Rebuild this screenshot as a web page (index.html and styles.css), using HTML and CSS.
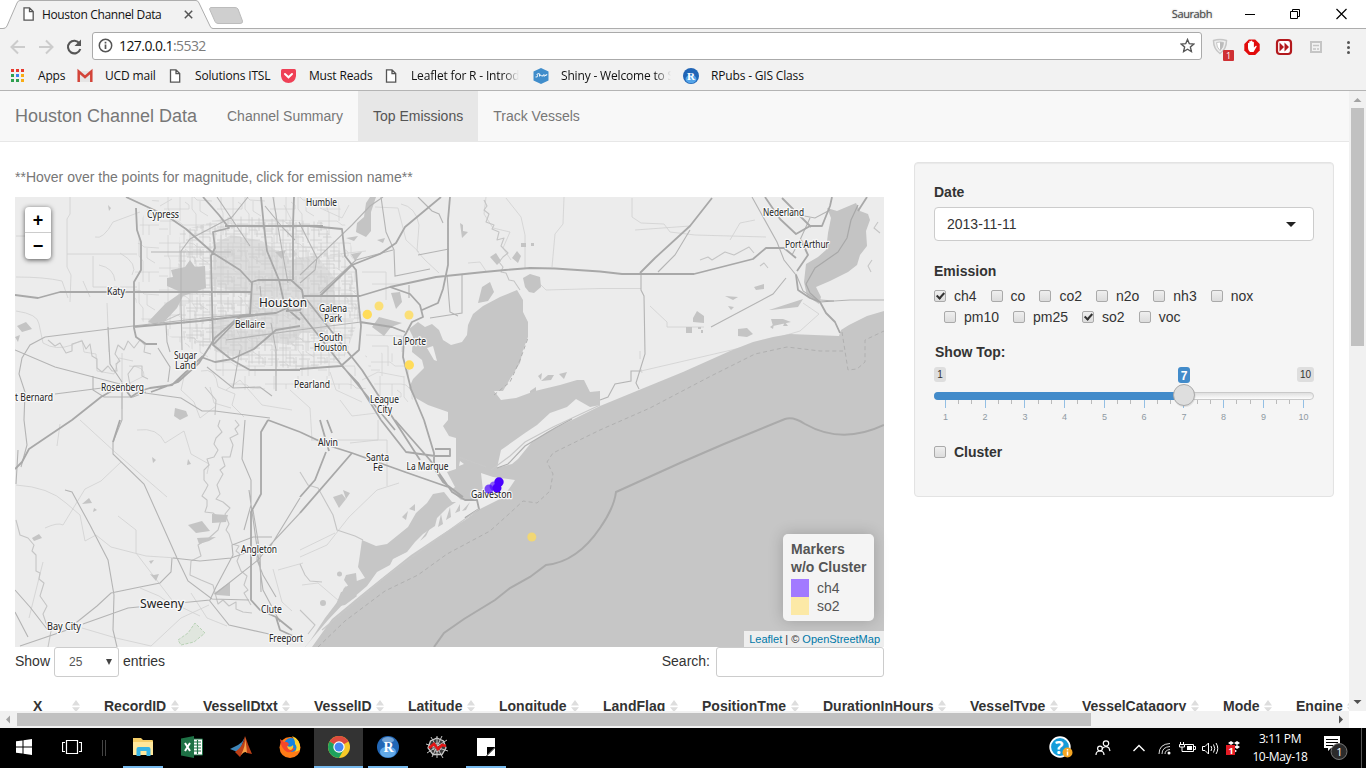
FILE: index.html
```html
<!DOCTYPE html>
<html lang="en">
<head>
<meta charset="utf-8">
<title>Houston Channel Data</title>
<link rel="stylesheet" href="styles.css">
</head>
<body>
<div class="browser">
  <div class="tabstrip">
    <svg class="tab-shape" width="260" height="29" viewBox="0 0 260 29"><path d="M0 28.5H3Q6 28.5 7 26L17 3Q18 .5 20 .5H196Q198 .5 199 3L210 26Q211 28.5 213 28.5V30H0Z" fill="#f2f2f2"/><path d="M0 28.5H3Q6 28.5 7 26L17 3Q18 .5 20 .5H196Q198 .5 199 3L210 26Q211 28.5 213 28.5H260" fill="none" stroke="#adadad"/><path d="M210.500 7.500H235Q237 7.500 238 9L242.500 21Q243 23.500 240 23.500H218Q216 23.500 215 21.500L209.500 9Z" fill="#cfcfcf" stroke="#bcbcbc"/></svg>
    <svg class="tab-icon" width="11" height="14" viewBox="0 0 11 14"><path d="M1 .8H6.500L10.200 4.500V13.200H1ZM6.500 1V4.700H10" fill="#fff" stroke="#555" stroke-width="1.300"/></svg>
    <span class="tab-title">Houston Channel Data</span>
    <svg class="tab-close" width="9" height="9" viewBox="0 0 9 9"><path d="M.8.8L8.200 8.200M8.200.8L.8 8.200" stroke="#555" stroke-width="1.500"/></svg>
    <span class="user">Saurabh</span>
    <svg class="win" width="104" height="12" viewBox="0 0 104 12"><g fill="none" stroke="#000"><path d="M0 6.500H10M45.500 3.500H52.500V10.500H45.500ZM47.500 3V1.500H54.500V8.500H53"/><path d="M91.500 1L101.500 11M101.500 1L91.500 11" stroke-width="1.200"/></g></svg>
  </div>
  <div class="toolbar">
    <svg class="navs" width="92" height="33" viewBox="0 29 92 33"><g fill="none" stroke="#ccc" stroke-width="2"><path d="M25 47H12M18 40.500L11.500 47L18 53.500M39 47H52M46 40.500L52.500 47L46 53.500"/><path d="M79.500 43.500A6.300 6.300 0 1 0 80.300 49" stroke="#555" stroke-width="2.100"/></g><path d="M81 39.500V46H74.500Z" fill="#555"/></svg>
    <div class="address">
      <svg width="15" height="15" viewBox="0 0 15 15"><circle cx="7.500" cy="7.500" r="6.200" fill="none" stroke="#555" stroke-width="1.500"/><path d="M7.500 6.500V11M7.500 3.800V5.400" stroke="#555" stroke-width="1.700"/></svg>
      <span class="url">127.0.0.1<i>:5532</i></span>
      <svg class="star" width="15" height="15" viewBox="0 0 15 15"><path d="M7.500 1.500L9.300 5.700L13.800 6.100L10.400 9.100L11.400 13.500L7.500 11.200L3.600 13.500L4.600 9.100L1.200 6.100L5.700 5.700Z" fill="none" stroke="#555" stroke-width="1.400"/></svg>
    </div>
    <svg class="exts" width="164" height="33" viewBox="1202 29 164 33">
      <path d="M1213.500 40.500Q1220 38.500 1226.500 40.500Q1226.500 49 1220 53.500Q1213.500 49 1213.500 40.500Z" fill="#eee" stroke="#c6c6c6" stroke-width="1.500"/><path d="M1216.500 42.500Q1220 41.500 1223.500 42.500Q1223.500 47.500 1220 50.500Q1216.500 47.500 1216.500 42.500Z" fill="#fff" stroke="#c6c6c6"/><path d="M1220 42V50.500Q1223.500 47.500 1223.500 42.500Z" fill="#bbb"/>
      <rect x="1223" y="50" width="11" height="11" rx="1" fill="#cf3034"/><text x="1226" y="59" font-size="9" fill="#fff" class="ui">1</text>
      <path d="M1248.800 39.500H1255.200L1259.700 44V50.400L1255.200 55H1248.800L1244.300 50.400V44Z" fill="#e20c0c"/><path d="M1248 48V43.200Q1248.700 42.400 1249.300 43.200V41.500Q1250 40.700 1250.800 41.500V41Q1251.600 40 1252.400 41V42Q1253.200 41.200 1253.900 42.200V47.500L1255.800 45.800Q1257 45.600 1256.600 46.700L1253.500 52H1250Q1248 50.500 1248 48Z" fill="#fff"/>
      <rect x="1277" y="40" width="14" height="14" rx="3" fill="#fff" stroke="#b3191d" stroke-width="2.200"/><path d="M1279.500 42.500L1284 47L1279.500 51.500ZM1284.500 42.500L1289 47L1284.500 51.500Z" fill="#b3191d"/>
      <rect x="1311" y="42" width="10" height="10" fill="none" stroke="#c5c5c5" stroke-width="2"/><path d="M1313 45.500H1319M1313 49H1316M1317 49H1319" stroke="#c5c5c5" stroke-width="1.600"/>
      <g fill="#555"><circle cx="1348.500" cy="42.500" r="1.500"/><circle cx="1348.500" cy="47.500" r="1.500"/><circle cx="1348.500" cy="52.500" r="1.500"/></g>
    </svg>
  </div>
  <div class="bookmarks">
    <div class="bm" style="width:67px"><svg width="16" height="16" viewBox="0 0 16 16"><path d="M1 1h3v3H1zM6 1h3v3H6zM11 1h3v3h-3z" fill="#e8392f"/><path d="M1 6h3v3H1zM1 11h3v3H1zM6 11h3v3H6z" fill="#2fa04f"/><path d="M6 6h3v3H6z" fill="#3b82f0"/><path d="M11 6h3v3h-3zM11 11h3v3h-3z" fill="#f9ac13"/></svg><span style="margin-left:12px">Apps</span></div>
    <div class="bm" style="width:91px"><svg width="16" height="16" viewBox="0 0 16 16"><path d="M1 3H15V14H1Z" fill="#e5e5e5"/><path d="M1.700 14V3.500L8 9L14.300 3.500V14" fill="none" stroke="#d34439" stroke-width="2.500"/></svg><span style="margin-left:12px">UCD mail</span></div>
    <div class="bm" style="width:112px"><svg width="16" height="16" viewBox="0 0 16 16"><path d="M2.500 1.800H8L11.700 5.500V14.200H2.500ZM8 2V5.700H11.500" fill="#fff" stroke="#555" stroke-width="1.300"/></svg><span style="margin-left:11px">Solutions ITSL</span></div>
    <div class="bm" style="width:104px"><svg width="17" height="16" viewBox="0 0 17 16"><path d="M2.500 1H14.500Q16 1 16 2.500V8Q15 15 8.500 15Q2 15 1 8V2.500Q1 1 2.500 1Z" fill="#ef4056"/><path d="M5 6L8.500 9.300L12 6" fill="none" stroke="#fff" stroke-width="2" stroke-linecap="round"/></svg><span style="margin-left:12px">Must Reads</span></div>
    <div class="bm" style="width:149px"><svg width="16" height="16" viewBox="0 0 16 16"><path d="M2.500 1.800H8L11.700 5.500V14.200H2.500ZM8 2V5.700H11.500" fill="#fff" stroke="#555" stroke-width="1.300"/></svg><span class="fade" style="margin-left:11px;width:108px">Leaflet for R - Introdu</span></div>
    <div class="bm" style="width:150px"><svg width="16" height="16" viewBox="0 0 16 16"><path d="M8 0L15.500 3.500V12.500L8 16L.5 12.500V3.500Z" fill="#408dcb"/><path d="M6 5.500Q2.500 6 4.500 7.500Q5 9.500 2.500 9M6.500 5.500V8.500M6.500 7.500Q8 6 8 8M9 7V8.500M10 8.500V7Q11.500 6 11.500 8.500M12 6.500L12.700 8L14 6" fill="none" stroke="#fff" stroke-width=".9"/></svg><span class="fade" style="margin-left:12px;width:110px">Shiny - Welcome to S</span></div>
    <div class="bm"><svg width="16" height="16" viewBox="0 0 16 16"><circle cx="8" cy="8" r="8" fill="#2165b6"/><ellipse cx="8" cy="11" rx="5.500" ry="4.300" fill="#54a4e8"/><text x="4" y="12" font-size="11" font-weight="bold" fill="#fff" class="serif">R</text></svg><span style="margin-left:12px">RPubs - GIS Class</span></div>
  </div>

  <div class="viewport">
    <div class="page">
      <nav class="navbar"><span class="brand">Houston Channel Data</span><span class="nav-item">Channel Summary</span><span class="nav-item active">Top Emissions</span><span class="nav-item">Track Vessels</span></nav>
      <div class="columns">
        <main class="content">
          <p class="hint">**Hover over the points for magnitude, click for emission name**</p>
          <div class="map">
            <svg width="869" height="450" viewBox="15 197 869 450">
              <defs>
                <pattern id="streets" width="31" height="27" patternUnits="userSpaceOnUse"><path d="M0 4H31M0 11H18M8 18H31M0 24H12M4 0V27M11 0V15M17 6V27M24 0V18M29 9V27M17 15H24M20 8H31M7 7H15V13M13 21H24V26M1 14H9V21" fill="none" stroke="#cbcbcb" stroke-width=".8"/></pattern>
                <pattern id="sparse" width="53" height="47" patternUnits="userSpaceOnUse"><path d="M0 8H30Q36 8 38 12L53 13M5 21H30M0 33H19L24 37H53M9 0V20L11 25V47M21 8V33M33 0V21L37 26V47M41 13V23L49 28M0 41H9M43 37V47M26 14L30 17V21" fill="none" stroke="#d3d3d3" stroke-width=".8"/></pattern>
              </defs>
              <rect x="15" y="197" width="869" height="450" fill="#ececec"/>
              <path d="M213 245L231 235L262 241L290 260L316 255L333 276L337 318L321 334L302 332L292 345L262 341L247 356L216 352L213 321L246 316L250 295L213 286Z" fill="#dddddd"/>
              <path d="M154 197H337L352 248L358 298L348 352L366 389H287L236 390L199 353L142 321L133 293L140 222Z" fill="url(#sparse)"/>
              <path d="M180 231L232 216L322 222L350 267L361 313L344 358L303 370L248 363L184 340L177 291Z" fill="url(#streets)"/>
              <path d="M364 352L405 354L418 397L394 408L378 396Z" fill="url(#sparse)"/>
              <g fill="none" stroke="#d0d0d0" stroke-width=".8">
                <path d="M70 197V214L67 219V267L71 275L70 302M67 254H137M93 256V287H137M16 236H44M16 277Q45 277 62 281L68 298M95 237Q103 240 113 222L140 212M99 265Q114 268 115 281M120 253Q139 264 132 275M83 281L90 297M107 303L109 352M122 353V409M16 311Q38 314 39 324L43 343Q56 351 72 345L82 340L84 352L96 354L97 371L114 374L119 358L133 361M129 366Q145 366 144 376L130 383L133 392M201 371Q216 367 218 387L235 394L232 405L244 417M205 329L234 324L241 339L260 334M216 338V370H258"/>
                <path d="M80 420L116 453L167 497M137 430Q158 427 165 443L184 431L191 454L209 464L207 474M45 528Q58 522 63 525L85 489L101 481L121 462M16 485Q49 487 66 503L80 515L85 541L96 535L111 547L146 556L177 558M118 516L136 530V553L175 604L200 616M82 628L116 638L151 646L181 618L209 605M140 588L159 596L172 605M191 593L207 618L227 626M273 569L282 602L292 611M278 570L303 563"/>
                <path d="M401 204Q416 207 419 225L417 251L425 260L439 273M506 198L521 217L525 235V268M564 197L563 224L555 234L552 267M540 284L546 290L600 288.500H641M486 197L484 214L493 228L510 232L503 248L511 260M468 263L480 262L486 271M632 198V217L641 223L664 224L670 232L695 235L766 237M641 371L753 345L800 331L819 314L803 303M641 369L642 373M650 306L667 322V327H704M640 359V351M635 230L690 226M730 240L740 223L755 220"/>
                <path d="M300 557L327 545L349 517L377 490L399 483M311 440H387V486M350 443L378 440V420M300 550L335 533M302 585L318 583L339 601L346 586"/>
                <path d="M185 372L181 390L194 402L200 418L216 406M210 387L214 403L231 408M60 424L57 446M43 562L29 618"/>
                <path d="M226 390L240 380L262 405L292 410M290 390L310 408L312 440M340 400L352 416L385 412M330 372L336 390L362 402M284 205L297 231M320 208L342 218L349 205M160 206L172 199M375 207L398 208L406 240L419 252M345 272V300M330 255L366 251M362 272H386V300M372 284H404M366 335L402 336V352M372 346H388V366M362 380L378 372L404 377M430 350L437 360" stroke="#d3d3d3"/>
              </g>
              <g fill="#c4c4c4">
                <path d="M148 322L165 304L182 292L176 290L167 286V278L173 277L171 270L185 267L190 260L195 267L205 266L206 288L183 296L177 308L165 321L154 324Z"/>
                <path d="M357 223L364 217L366 203L370 197H376L371 212V231L366 237L356 232Z"/>
                <path d="M460 223L463 225V231L468 232L462 238ZM523 278L530 274L540 277L541 287L534 293L529 292L525 287ZM490 257L496 253L501 261L497 265ZM512 258L517 251L521 256L518 263ZM521 243h5v4h-5ZM531 243h3v3h-3ZM478 303L482 287L490 282L494 292L488 301ZM391 293L400 292L402 302L396 309ZM402 323L391 327L384 336L372 327L379 317Z"/>
                <path d="M693 318L697 311L704 316V323L693 322ZM738 329L747 328L753 334L747 337L738 336ZM769 310L803 299L798 307L771 310ZM771 319L783 319L791 322L773 326ZM725 296L738 297L733 300ZM785 322L788 326L783 326ZM770 327L774 324L773 329ZM548 375L554 375L551 380L541 381ZM559 374L567 372L564 379ZM530 391L536 387V393L530 393ZM538 376L542 373L541 380ZM686 327h6v6h-6ZM698 327h3v2h-3ZM701 330h2v3h-2ZM754 287L764 284V289L756 290ZM728 306L734 307L731 310ZM175 408L186 411L188 416L180 420L174 416ZM188 525L202 521L210 531L196 533ZM212 514L228 515L226 522L212 523ZM197 538L216 537L209 541L199 544Z"/>
                <path d="M213 594L230 582V596L217 595ZM32 538L39 534L42 538L34 541ZM89 498L92 503L82 504ZM17 326L26 322L32 329L22 332ZM15 337L20 335L18 342ZM343 490L350 493L346 499ZM338 499L341 503L338 507ZM150 574L154 575L159 574L156 581ZM149 561L154 560L151 564ZM94 508L97 510L93 512ZM152 457L156 460L153 463ZM188 459L191 464L187 465ZM108 205L111 208L109 211ZM275 252L286 250L282 259ZM346 238L358 236L354 241ZM377 240L385 238L383 243ZM351 254L362 252L355 261Z"/>
              </g>
              <path d="M884 311L867 316L849 325L841 330L839 336L790 334L773 337L753 342L730 351L683 372L639 390L600 406L572 420L547 432L531 443L518 459L512 464L497 468L501 450L525 433L537 425L550 413L567 407L576 399L590 407L600 405L600 391L590 392L584 380L577 380L560 385L535 391L516 398L501 400L494 391L503 391L510 379L520 363L523 350L528 337L528 322L523 312V300L517 290L500 297L483 306L473 314L468 325L467 335L462 342L451 345L443 340L439 330L432 324L425 327L418 322L409 329L413 337L412 352L422 360L424 368L413 379L409 388L414 397L428 405L448 412V420L443 426L449 436L456 438V469L447 472L455 487L451 490L459 498L463 502L452 502L444 492L433 494L427 503L416 513L408 527L387 544L376 546L362 540L359 561L358 567L365 578L354 582L344 588L338 601L325 618L310 641L305 647H884Z" fill="#c6c6c6"/>
              <path d="M806 264L818 257L826 250L828 233L831 218L827 208L837 211L856 203L860 211L868 214L870 220L866 231L867 246L860 255L857 265L848 272L830 281L816 287L821 297L819 304L807 296L804 282Z" fill="#c4c4c4"/>
              <path d="M367 586L377 572L390 565L393 559L407 552L415 542L423 534L435 526L437 518L447 508L459 500L473 499L474 491L483 491L481 473L493 477L515 480L509 489L500 499L480 509L465 520L441 535L411 555L382 578L361 595L332 619L312 647H305L328 620L345 602L353 598Z" fill="#ececec"/>
              <path d="M433 346L437 361L434 360L427 348ZM460 461L464 464L459 466Z" fill="#eee"/>
              <g fill="#c6c6c6"><path d="M420 541L431 526L426 536ZM438 527L441 514L443 524ZM446 520L450 507L451 517ZM455 513L460 504V511ZM462 511L470 502L466 510Z"/><path d="M333 497L342 494L346 499L339 508ZM409 509L415 504V511ZM402 517L408 511L406 520ZM346 575L356 573L357 583L349 587L344 580ZM341 592L352 590L357 596L345 605L335 607ZM320 603a3 3 0 1 0 6 0a3 3 0 1 0-6 0ZM337 574a2.500 2.500 0 1 0 5 0a2.500 2.500 0 1 0-5 0Z"/></g>
              <!-- rivers -->
              <g fill="none" stroke="#c5c5c5" stroke-width="1.100" stroke-linejoin="round">
                <path d="M220 420L218 426L222 432L216 438L214 444L218 450L214 457L207 459L209 465L204 470V480L208 485L206 489L202 496L207 500V506L205 512L213 513L221 520L218 530L209 538L198 545L201 556L191 561L190 575L201 580L213 585L218 604L223 600L229 606L236 602V609L243 612L252 613"/>
                <path d="M235 420L239 425L235 429L238 434L230 438L233 445L230 457H222L225 466L220 470L223 474L217 485L220 494L216 499L223 502L230 508L225 514L229 524L226 530L229 534L232 544L239 546L236 551L240 554L237 561L241 571L247 576L244 585L248 590L244 593L251 605"/>
                <path d="M16 520L20 535L28 538L34 545L32 551L36 555V571L40 573L39 579L44 583L40 596L47 606L43 614L46 623L51 631L48 647"/>
                <path d="M484 200L487 206L484 210L489 214L486 222L494 225L492 229L499 232L497 240L504 238L501 246L508 253L503 257L499 262L503 267L501 272L506 273L509 280L514 281L520 290"/>
                <path d="M160 323L180 314M181 287V272M300 472L308 485L318 488L333 515L337 530L343 532L355 536L363 540M300 564L305 575L310 581L322 582M300 610L315 625L308 634"/>
                <path d="M48 340L55 346L60 343L66 353L72 351V344L82 341L86 349L90 344L92 356L97 359V368L102 372L108 366L112 371H117L116 364L120 361L115 354L118 345L124 350L128 341L134 348L140 340L145 345L144 352L151 354M130 385L128 374L134 366H142V376L148 379M205 387L216 400L215 415M700 260L708 257L712 260L725 252L734 255L749 247L754 253M760 266L764 263L768 268M872 260L868 266L871 272M878 222L874 228L880 233"/>
              </g>
              <!-- secondary roads -->
              <g fill="none" stroke="#b4b4b4" stroke-width="1.100">
                <path d="M45 337L30 345L22 358L19 374L25 392L24 420L27 445L21 467M108 327L110 364L122 382M45 337L133 326L213 317L250 314M158 348L170 367L168 382M122 383V420L113 442V454L144 484L177 558L188 581L212 599L249 600M15 350L55 367L120 384M55 394L102 388M93 376V390L104 397H133L146 392M145 393L181 398L202 411L215 411L270 418"/>
                <path d="M207 367L233 388L260 387L272 396M276 391V350L271 323M233 388L240 350M181 251V304L182 350M166 324L167 342L170 352M151 252H231M181 251L190 239L232 217L248 197M217 197L250 246M300 275L352 225L370 206L383 197M320 293L356 260L393 250M265 206L283 228L295 240M273 197L282 250L288 283M260 286L262 306M226 340L291 331L361 322M299 222L317 258L315 270L300 283"/>
                <path d="M381 197L386 232L394 250L395 276L430 269M409 285V298M447 275L450 312L458 316M462 274L462 313L430 318M418 255L449 249M418 197L426 205L432 211L439 214L443 223"/>
                <path d="M641 274V290L644 296L645 354L636 383L639 389M752 197L777 242L784 260L796 275M690 230L675 255L658 272M711 327L773 294L786 278M796 274L803 291L820 302M783 212L815 218L830 210M810 218L800 240L792 255M641 371H631V381L615 384L608 397L600 400M820 300L834 301L850 300H884"/>
                <path d="M65 490L72 492L90 525L108 560L114 595L113 630L117 647M172 558L171 572L160 583L140 587L111 593L97 606L67 630L20 646M83 624L128 608L210 600L216 587L233 555L232 545L253 537H272M173 558L200 561L231 558L248 552M215 594L258 560L270 545L300 513M270 547L300 498M245 420L242 459L251 480V505L244 530M249 490L263 590L280 622M253 510L260 553L261 592M258 540L257 560L263 575L276 597M209 600L229 625L269 634M15 590L30 607L47 629M15 612L28 637M16 484L18 450"/>
              </g>
              <!-- highways -->
              <g fill="none" stroke="#a8a8a8" stroke-width="1.800" stroke-linejoin="round">
                <path d="M136 208L137 230L141 242V270L134 282V328L136 337L146 344H157M15 295L38 298L60 292H135L252 292M126 197L167 216L186 229L213 253L240 270L252 283L250 315M133 327L200 321L250 315L276 313L287 308L300 302M203 197L219 215L229 228L213 232L215 248L211 256L213 345L232 360L250 370H300M201 357L215 362L232 359L254 349L276 330L300 326M213 345L240 317L276 313M261 197L264 227L267 251L279 280L285 307L300 320M252 282L258 280H291L302 290L304 302L300 310L286 311M294 197L293 225V280M225 226H323"/>
                <path d="M323 226H310L342 229L345 256L356 270L358 297L361 326L359 350L341 366L300 369M441 197L405 227L396 243L380 254L352 265L320 296M302 296H360L390 287L436 277L484 272L505 270L530 268L555 268.500L600 271.500L622 274H694L753 259L766 248H784L796 258M390 287L410 294L420 305L423 317L412 322L404 337L403 357L411 389L424 420M300 312L340 363L395 430M307 300L362 370L420 460M360 322L392 327L405 332M341 365L358 383L381 420M450 197L448 220V265L443 289L438 303L422 310"/>
                <path d="M640 273L655 258L690 226L712 198M765 197L780 219L796 234L810 226H822L830 206L832 197M796 275L798 290L810 298L820 302L826 313L835 322L840 333M867 197L858 211M782 198L811 227M801 240L808 255L797 271"/>
                <path d="M858 205L851 220L847 238L838 252L815 268L806 284L810 293L820 302L834 301" stroke-width="1.200"/>
                <path d="M15 469L22 462L29 449L72 420L101 397L122 385L131 397L140 391L150 388L172 385L203 356M120 420L113 442M268 420L261 432V494L251 512V600L260 610L276 617L292 630M268 420L300 432M276 617L280 630L295 637M151 392L178 382L199 363L215 338L240 316L252 315"/>
                <path d="M381 420L406 452L435 456L450 456V449H435M424 420L434 453V468L443 482L463 497M300 432L330 446L352 453L405 472L448 487M395 420L430 460L452 492L465 500H477L479 509L465 518M300 497L315 480L326 452M300 513L352 453M329 451L320 420M327 420L332 433"/>
              </g>
              <g fill="none" stroke="#c8c8c8" stroke-width="1.200"><path d="M479 509L430 544L385 577L322 630M491 470L510 456L525 442L553 427L600 405M459 457L486 467"/><path d="M497 468L508 464L525 446L555 428L572 419" stroke="#b0b0b0"/></g>
              <path d="M434 647L444 633L464 619L495 600L510 588L530 577L546 565Q577 562 600 528Q614 508 616 492L680 463L724 444L785 419Q793 416 805 424Q842 445 884 425" fill="none" stroke="#aaa" stroke-width="2"/>
              <path d="M318 647L345 621L385 591L418 575L447 554L490 531L510 513L523 501L537 503L550 491L553 474L547 462L553 453L600 430L650 408L711 376L755 354L787 347L820 351H843M842 332L848 370L857 369L865 362V340L884 331M494 395L510 382L520 360L528 338" fill="none" stroke="#b0b0b0" stroke-dasharray="4 3"/>
              <path d="M178 640L188 633L195 623L205 633L194 642L181 645Z" fill="#e0e6de" stroke="#b9d2b6" stroke-dasharray="3 1.500"/>
              <g fill="#ffdc5a"><circle cx="367.300" cy="314.500" r="4.700"/><circle cx="379" cy="306" r="4.500" opacity=".8"/><circle cx="409" cy="315" r="4.500" opacity=".8"/><circle cx="409.300" cy="365" r="4.700"/><circle cx="531.800" cy="537" r="4.500" opacity=".75"/></g>
              <g class="labels">
                <text x="147" y="218" textLength="32" lengthAdjust="spacingAndGlyphs">Cypress</text><text x="306" y="205.500" textLength="31" lengthAdjust="spacingAndGlyphs">Humble</text><text x="763" y="215.500" textLength="41" lengthAdjust="spacingAndGlyphs">Nederland</text><text x="785" y="247.500" textLength="44" lengthAdjust="spacingAndGlyphs">Port Arthur</text>
                <text x="107" y="295" textLength="18" lengthAdjust="spacingAndGlyphs">Katy</text><text x="259" y="307" textLength="48" lengthAdjust="spacingAndGlyphs" class="big">Houston</text><text x="235" y="328" textLength="30" lengthAdjust="spacingAndGlyphs">Bellaire</text><text x="319" y="312" textLength="28" lengthAdjust="spacingAndGlyphs">Galena</text><text x="324" y="322" textLength="18" lengthAdjust="spacingAndGlyphs">Park</text>
                <text x="319" y="341" textLength="24" lengthAdjust="spacingAndGlyphs">South</text><text x="314" y="351" textLength="33" lengthAdjust="spacingAndGlyphs">Houston</text><text x="393" y="345" textLength="33" lengthAdjust="spacingAndGlyphs">La Porte</text><text x="174" y="359" textLength="23" lengthAdjust="spacingAndGlyphs">Sugar</text><text x="175" y="369" textLength="21" lengthAdjust="spacingAndGlyphs">Land</text>
                <text x="101" y="390.500" textLength="43" lengthAdjust="spacingAndGlyphs">Rosenberg</text><text x="15" y="401" textLength="38" lengthAdjust="spacingAndGlyphs">t Bernard</text><text x="294" y="387.500" textLength="36" lengthAdjust="spacingAndGlyphs">Pearland</text><text x="370" y="402.500" textLength="29" lengthAdjust="spacingAndGlyphs">League</text><text x="377" y="412.500" textLength="15" lengthAdjust="spacingAndGlyphs">City</text>
                <text x="318" y="446" textLength="20" lengthAdjust="spacingAndGlyphs">Alvin</text><text x="366" y="460.500" textLength="23" lengthAdjust="spacingAndGlyphs">Santa</text><text x="373" y="470.500" textLength="10" lengthAdjust="spacingAndGlyphs">Fe</text><text x="406.500" y="469.500" textLength="42" lengthAdjust="spacingAndGlyphs">La Marque</text><text x="471" y="498" textLength="41" lengthAdjust="spacingAndGlyphs">Galveston</text>
                <text x="241" y="552.500" textLength="36" lengthAdjust="spacingAndGlyphs">Angleton</text><text x="140" y="608" textLength="44" lengthAdjust="spacingAndGlyphs" class="big">Sweeny</text><text x="261" y="612.500" textLength="21" lengthAdjust="spacingAndGlyphs">Clute</text><text x="47" y="630" textLength="34" lengthAdjust="spacingAndGlyphs">Bay City</text><text x="269" y="642" textLength="34" lengthAdjust="spacingAndGlyphs">Freeport</text>
              </g>
              <g fill="#4a00ff"><circle cx="489" cy="489" r="4.500" opacity=".7"/><circle cx="494" cy="486" r="4.500" opacity=".6"/><circle cx="497" cy="488" r="4.500"/><circle cx="499" cy="482" r="4.700"/></g>
            </svg>
            <div class="zoomctl"><span>+</span><span>−</span></div>
            <div class="legend"><strong>Markers<br>w/o Cluster</strong><div><i class="sw ch4"></i>ch4</div><div><i class="sw so2"></i>so2</div></div>
            <div class="attrib"><a>Leaflet</a> | © <a>OpenStreetMap</a></div>
          </div>
          <div class="table-tools"><span>Show</span><span class="length">25<svg width="6" height="6" viewBox="0 0 6 6"><path d="M0 0H6L3 6Z" fill="#444"/></svg></span><span>entries</span><span class="search-label">Search:</span><span class="search"></span></div>
        </main>
        <aside class="well">
          <div class="label">Date</div>
          <div class="select">2013-11-11<svg width="10" height="5" viewBox="0 0 10 5"><path d="M0 0H10L5 5Z" fill="#222"/></svg></div>
          <div class="label emission">Emission</div>
          <div class="checks"><label class="on"><i></i>ch4</label><label><i></i>co</label><label><i></i>co2</label><label><i></i>n2o</label><label><i></i>nh3</label><label><i></i>nox</label></div>
          <div class="checks second"><label><i></i>pm10</label><label><i></i>pm25</label><label class="on"><i></i>so2</label><label><i></i>voc</label></div>
          <div class="label show">Show Top:</div>
          <svg class="slider" width="380" height="60" viewBox="934 365 380 60">
            <defs><linearGradient id="rail" x2="0" y2="1"><stop offset="0" stop-color="#ddd"/><stop offset="1" stop-color="#fff"/></linearGradient></defs>
            <rect x="934" y="367" width="12" height="15" rx="3" fill="#dedede"/><rect x="1297" y="367" width="17" height="15" rx="3" fill="#dedede"/><rect x="1178" y="367" width="12" height="16" rx="3" fill="#428bca"/>
            <g font-size="10" fill="#333" text-anchor="middle"><text x="940" y="378">1</text><text x="1305.500" y="378">10</text><text x="1184" y="379.500" font-size="12" font-weight="bold" fill="#fff">7</text></g>
            <path d="M958.500 400v4M971.500 400v4M998.500 400v4M1011.500 400v4M1038.500 400v4M1051.500 400v4M1077.500 400v4M1091.500 400v4M1117.500 400v4M1130.500 400v4M1157.500 400v4M1170.500 400v4M1197.500 400v4M1210.500 400v4M1236.500 400v4M1250.500 400v4M1276.500 400v4M1289.500 400v4" stroke="#bbb"/>
            <path d="M945.500 400v8M985.500 400v8M1024.500 400v8M1064.500 400v8M1104.500 400v8M1144.500 400v8M1183.500 400v8M1223.500 400v8M1263.500 400v8M1303.500 400v8" stroke="#93bfe4"/>
            <rect x="934.500" y="392.500" width="379" height="7" rx="3.500" fill="url(#rail)" stroke="#c9c9c9"/><path d="M938 392H1184V400H938Q934 400 934 396T938 392Z" fill="#428bca"/>
            <circle cx="1184.500" cy="396" r="11" fill="#888" opacity=".2"/><circle cx="1184" cy="395" r="10.500" fill="#dedede" stroke="#aaa"/>
            <g class="scale" text-anchor="middle"><text x="945.500" y="420">1</text><text x="985" y="420">2</text><text x="1025" y="420">3</text><text x="1064.500" y="420">4</text><text x="1104.500" y="420">5</text><text x="1144" y="420">6</text><text x="1184" y="420">7</text><text x="1223.500" y="420">8</text><text x="1263.500" y="420">9</text><text x="1303.500" y="420">10</text></g>
          </svg>
          <div class="checks cluster"><label><i></i>Cluster</label></div>
        </aside>
      </div>
      <div class="thead"><span>X</span><span>RecordID</span><span>VesselIDtxt</span><span>VesselID</span><span>Latitude</span><span>Longitude</span><span>LandFlag</span><span>PositionTme</span><span>DurationInHours</span><span>VesselType</span><span>VesselCatagory</span><span>Mode</span><span>Engine</span></div>
    </div>
    <svg class="vscroll" width="17" height="620" viewBox="0 0 17 620"><rect width="17" height="620" fill="#f1f1f1"/><path d="M4.500 11L8.500 7L12.500 11Z" fill="#a3a3a3"/><rect x="2" y="17" width="13" height="238" fill="#c1c1c1"/><path d="M4.500 609L8.500 613L12.500 609Z" fill="#505050"/></svg>
    <svg class="hscroll" width="1366" height="17" viewBox="0 0 1366 17"><rect width="1349" height="17" fill="#f1f1f1"/><rect x="1349" width="17" height="17" fill="#fff"/><path d="M10 4.500V12.500L6 8.500Z" fill="#a3a3a3"/><rect x="17" y="2" width="1074" height="13" fill="#c1c1c1"/><path d="M1339 4.500V12.500L1343 8.500Z" fill="#505050"/></svg>
  </div>

  <div class="taskbar">
    <div class="task start"><svg width="16" height="16" viewBox="0 0 16 16"><path d="M0 2.300L6.500 1.400V7.500H0ZM7.500 1.200L16 0V7.500H7.500ZM0 8.500H6.500V14.600L0 13.700ZM7.500 8.500H16V16L7.500 14.800Z" fill="#fff"/></svg></div>
    <div class="task start"><svg width="20" height="14" viewBox="0 0 20 14"><path d="M4.500.5H15.500V13.500H4.500ZM3 2.500H.5V11.500H3M17 2.500H19.500V11.500H17" fill="none" stroke="#fff" stroke-width="1.200"/></svg></div>
    <div class="sep"></div>
    <div class="task run"><svg width="22" height="20" viewBox="0 0 22 20"><path d="M1 1H9L11 3H20Q21 3 21 4V18H1Z" fill="#f5ce69"/><path d="M1 5H21V18H1Z" fill="#ffe79b"/><path d="M4.500 19V12Q4.500 10 6.500 10H16.500Q18.500 10 18.500 12V19H14.500V14H8.500V19Z" fill="#36b4e5"/></svg></div>
    <div class="task"><svg width="22" height="22" viewBox="0 0 22 22"><path d="M11 3H21.500V19H11Z" fill="#fff" stroke="#1e7145"/><path d="M13 6H20M13 9H20M13 12H20M13 15H20M16.500 4V18" stroke="#1e7145" stroke-width="1.200"/><path d="M0 2.500L13 0V22L0 19.500Z" fill="#1e7145"/><path d="M4 7L9 15M9 7L4 15" stroke="#fff" stroke-width="2"/></svg></div>
    <div class="task"><svg width="24" height="22" viewBox="0 0 24 22"><path d="M1 13L9 9L13 6L16 1L10 17L6 15Z" fill="#3f86b9"/><path d="M16 0Q14 11 6 16L11 21Q15 13 18 17L23 18Q19 9 16 0Z" fill="#bd3f16"/><path d="M16 1Q17 9 12 19Q16 14 18 17Q17 7 16 1Z" fill="#f7a24a"/></svg></div>
    <div class="task"><svg width="24" height="24" viewBox="0 0 24 24"><circle cx="12" cy="12.500" r="10.500" fill="#ff7b16"/><circle cx="13" cy="10" r="7" fill="#1583df"/><path d="M14 1Q23 4 22 15L17 17Q20 12 17 9Q17 4 14 1Z" fill="#ffd22d"/><path d="M2 4L6 7Q9 6 11 9L9 12Q12 14 17 13Q14 18 9 17Q3 14 2 4Z" fill="#f4472b"/><path d="M9 11Q13 13 15 10Q16 13 13 15Q10 15 9 11Z" fill="#ffc52c"/></svg></div>
    <div class="task current"><svg width="22" height="22" viewBox="0 0 22 22"><circle cx="11" cy="11" r="11" fill="#f7c928"/><path d="M11 11L1.500 5.500A11 11 0 0 1 20.500 5.500Z" fill="#dd4b3e"/><path d="M11 11L1.500 5.500A11 11 0 0 0 11 22L15.800 13.500Z" fill="#1da25d"/><circle cx="11" cy="11" r="5.700" fill="#fff"/><circle cx="11" cy="11" r="4.500" fill="#4586f2"/></svg></div>
    <div class="task run"><svg width="24" height="24" viewBox="0 0 24 24"><circle cx="12" cy="12" r="11" fill="#2267b6"/><ellipse cx="12" cy="17" rx="8" ry="5.500" fill="#61a9e9"/><ellipse cx="12" cy="5" rx="6" ry="3" fill="#aacded" opacity=".6"/><text x="7.500" y="16.500" font-size="14" fill="#fff" font-weight="bold" class="serif">R</text></svg></div>
    <div class="task"><svg width="24" height="24" viewBox="0 0 24 24"><path d="M12 3L18.500 6L21 13L17 19.500H8L3 13L5.500 6Z" fill="#3a3a3a" stroke="#ccc" stroke-width="1.300"/><path d="M12 8L16 10V14L12 17L8 14V10Z" fill="none" stroke="#bbb"/><path d="M12 1V23M1 9L23 16M22 5L2 18M6 2L18 23M17 1L7 22" stroke="#c4c4c4" stroke-width="1"/><path d="M4 13L9 9L13 14L17 10L21 11" fill="none" stroke="#e31515" stroke-width="2.700"/></svg></div>
    <div class="task run"><svg width="18" height="18" viewBox="0 0 18 18"><path d="M0 0H18V9L9 18H0Z" fill="#fff"/><path d="M10 9H18L10 17Z" fill="#000"/><path d="M18 10V18H10Z" fill="#fff"/></svg></div>
    <div class="tray">
      <span style="width:43px"><svg width="24" height="24" viewBox="0 0 24 24"><circle cx="11" cy="11" r="9.800" fill="#169dd9" stroke="#fff" stroke-width="1.800"/><text x="6" y="17.500" font-size="18" font-weight="bold" fill="#fff" class="ui">?</text><circle cx="18.500" cy="16.500" r="5" fill="#f5a623"/><path d="M18.500 15.500V19.500M18.500 13V14.500" stroke="#fff" stroke-width="1.500"/></svg></span>
      <span style="width:42px"><svg width="16" height="16" viewBox="0 0 16 16"><g fill="none" stroke="#fff" stroke-width="1.200"><circle cx="11" cy="3.500" r="2.700"/><path d="M7 9Q10 5 14 8L15 11"/><circle cx="5" cy="8.500" r="2.400"/><path d="M1 15Q1 11 5 11T9 15"/></g></svg></span>
      <span style="width:30px"><svg width="12" height="8" viewBox="0 0 12 8"><path d="M.5 7L6 1.500L11.500 7" fill="none" stroke="#fff" stroke-width="1.400"/></svg></span>
      <span style="width:21px"><svg width="13" height="13" viewBox="0 0 13 13"><g fill="none" stroke="#ddd"><path d="M1 12Q1 2 12 1.500M4 12Q4 5 12 4.500M7 12Q7 8 12 7.500"/></g><circle cx="11" cy="11" r="1.500" fill="#fff"/></svg></span>
      <span style="width:24px"><svg width="17" height="13" viewBox="0 0 17 13"><path d="M6 2.500H14.500V9.500H5M15 4.500H16.500V7.500H15M1.500 0V2.500M4.500 0V2.500M.5 2.500H5.500V5H.5ZM3 5V9.500H5" fill="none" stroke="#fff"/><path d="M8 4H13V8H8Z" fill="#fff"/></svg></span>
      <span style="width:22px"><svg width="17" height="13" viewBox="0 0 17 13"><path d="M.5 4.500H3L6.500 1V12L3 8.500H.5ZM9 4Q10.500 6.500 9 9M11.500 2.500Q14 6.500 11.500 10.500M14 1Q17.500 6.500 14 12" fill="none" stroke="#fff"/></svg></span>
      <span style="width:26px"><svg width="16" height="16" viewBox="0 0 16 16"><path d="M5 1L8 3L5 5L2 3ZM11 1L14 3L11 5L8 3ZM5 5L8 7L5 9L2 7ZM11 5L14 7L11 9L8 7ZM8 9L11 11L8 13L5 11Z" fill="#fff"/><path d="M0 5H9V15H0Z" fill="#e51b24"/><text x="2.500" y="13.500" font-size="9" font-weight="bold" fill="#fff" class="ui">1</text></svg></span>
      <div class="clock"><b>3:11 PM</b><b>10-May-18</b></div>
      <span style="width:46px"><svg class="notice" width="26" height="26" viewBox="0 0 26 26"><path d="M1 1H17V13H8L5 16V13H1Z" fill="#fff"/><path d="M3 4.500H15M3 7.500H15M3 10.500H10" stroke="#000"/><circle cx="16" cy="16.500" r="8" fill="#2b2b2b" stroke="#777"/><text x="13.300" y="20.500" font-size="11" fill="#fff" class="ui">1</text></svg></span>
      <div class="peek"></div>
    </div>
  </div>
</div>
</body>
</html>
```
FILE: styles.css
```css
* { box-sizing: border-box; }
body { margin: 0; font-family: "Liberation Sans", Arial, sans-serif; font-size: 14px; line-height: 20px; color: #333; background: #fff; overflow: hidden; }
svg { display: block; flex: none; }
.ui { font-family: "Open Sans", sans-serif; }
.serif { font-family: "Liberation Serif", serif; }
.browser { display: flex; flex-direction: column; width: 1366px; height: 768px; }
.tabstrip, .toolbar, .bookmarks { font-family: "Open Sans", "Noto Sans", sans-serif; font-size: 12px; color: #111; display: flex; align-items: center; flex: none; }
.tabstrip { height: 29px; border-bottom: 1px solid #adadad; position: relative; padding-left: 23px; }
.tab-shape { position: absolute; left: 0; top: 0; }
.tab-icon, .tab-title, .tab-close { position: relative; }
.tab-title { width: 124px; margin-left: 8px; margin-right: 18px; letter-spacing: -.36px; white-space: nowrap; padding-top: 2px; }
.user { margin-left: auto; margin-right: 33px; font-size: 11px; letter-spacing: -.4px; color: #444; text-shadow: 0 0 2px #999; }
.win { margin-right: 17px; }
.toolbar { height: 33px; background: #f2f2f2; }
.address { flex: 1; height: 28px; border: 1px solid #aaa; border-radius: 3px; background: #fff; display: flex; align-items: center; padding-left: 5px; padding-right: 6px; }
.url { margin-left: 6px; padding-top: 1px; font-size: 14px; letter-spacing: -.57px; }
.url i { font-style: normal; color: #7c7c7c; }
.star { margin-left: auto; }
.bookmarks { height: 29px; background: #f2f2f2; border-bottom: 1px solid #b4b4b4; padding-left: 10px; letter-spacing: -.17px; white-space: nowrap; }
.bm { display: flex; align-items: center; flex: none; }
.fade { overflow: hidden; -webkit-mask-image: linear-gradient(90deg, #000 85%, transparent); mask-image: linear-gradient(90deg, #000 85%, transparent); }
.viewport { height: 637px; flex: none; display: grid; grid-template-columns: 1349px 17px; grid-template-rows: 620px 17px; }
.page { overflow: hidden; display: flex; flex-direction: column; }
.hscroll { grid-column: 1 / 3; }
.navbar { height: 51px; flex: none; background: #f8f8f8; border-bottom: 1px solid #e7e7e7; display: flex; color: #777; line-height: 50px; padding-left: 15px; }
.brand { font-size: 18px; width: 197px; }
.nav-item { padding: 0 15px; }
.active { background: #e7e7e7; color: #555; }
.columns { display: flex; flex: none; gap: 30px; padding: 20px 15px 0; height: 553px; }
.content { width: 869px; }
.hint { margin: 5px 0 10px; color: #777; }
.map { position: relative; height: 450px; }
.labels { font-family: "Noto Sans", sans-serif; font-size: 10px; fill: #222; stroke: #f8f8f8; stroke-width: 2.500px; paint-order: stroke; stroke-linejoin: round; }
.labels .big { font-size: 12px; }
.zoomctl { position: absolute; left: 10px; top: 10px; width: 26px; background: #fff; border-radius: 4px; box-shadow: 0 1px 5px rgba(0,0,0,.65); font-size: 18px; line-height: 26px; font-weight: bold; color: #000; text-align: center; }
.zoomctl span { display: block; height: 26px; }
.zoomctl span:first-child { height: 25px; }
.zoomctl span + span { height: 27px; border-top: 1px solid #ccc; line-height: 26px; }
.legend { position: absolute; right: 10px; bottom: 26px; width: 91px; height: 87px; padding: 6px 8px; border-radius: 5px; background: rgba(255,255,255,.8); box-shadow: 0 0 15px rgba(0,0,0,.2); line-height: 18px; color: #555; white-space: nowrap; }
.legend strong { display: block; margin-bottom: 3px; }
.legend div { display: flex; }
.sw { width: 18px; height: 18px; margin-right: 8px; }
.ch4 { background: #a27aff; }
.so2 { background: #fce9a6; }
.attrib { position: absolute; right: 0; bottom: 0; height: 16px; padding: 0 4px 0 5px; background: rgba(255,255,255,.7); font-size: 11px; line-height: 16px; white-space: nowrap; }
.attrib a { color: #0078a8; }
.table-tools { display: flex; align-items: flex-start; line-height: 28px; }
.length { width: 65px; height: 30px; margin: 0 4px; padding: 0 6px 0 14px; border: 1px solid #ccc; border-radius: 3px; font-size: 12px; color: #555; display: flex; justify-content: space-between; align-items: center; }
.search-label { margin-left: auto; }
.search { width: 168px; height: 30px; margin-left: 6px; border: 1px solid #ccc; border-radius: 3px; }
.well { width: 420px; height: 335px; padding: 19px; background: #f5f5f5; border: 1px solid #e3e3e3; border-radius: 4px; box-shadow: inset 0 1px 1px rgba(0,0,0,.05); }
.label { font-weight: bold; margin-bottom: 5px; }
.select { height: 34px; border: 1px solid #ccc; border-radius: 4px; background: #fff; padding: 0 17px 0 12px; display: flex; align-items: center; justify-content: space-between; }
.emission { margin-top: 20px; }
.checks { display: flex; gap: 14px; height: 20px; align-items: center; }
.checks label { display: flex; align-items: center; }
.checks i { width: 12px; height: 12px; margin-right: 8px; border: 1px solid #aaa; border-radius: 2px; background: linear-gradient(#efefef, #dcdcdc); }
.on i::after { content: ""; display: block; width: 3px; height: 6px; margin: 0 0 0 3px; border: solid #333; border-width: 0 2px 2px 0; transform: rotate(42deg); box-sizing: content-box; }
.second { margin: 1px 0 0 10px; }
.show { margin: 15px 0 3px 1px; }
.slider text { font-family: "Liberation Sans", Arial, sans-serif; }
.scale { font-size: 9px; fill: #8f9aa3; }
.cluster { font-weight: bold; margin-top: 17px; }
.thead { display: grid; flex: none; width: 1379px; margin-top: 1px; padding-left: 33px; grid-template-columns: 71px 99px 111px 94px 91px 104px 99px 121px 147px 112px 141px 73px 83px; font-weight: bold; line-height: 20px; }
.thead span { display: flex; justify-content: space-between; align-items: center; padding-right: 24px; white-space: nowrap; }
.thead span::after { content: ""; width: 8px; height: 12px; background: #ddd; clip-path: polygon(50% 0, 100% 45%, 0 45%, 0 60%, 100% 60%, 50% 100%, 0 60%, 0 45%); }
.taskbar { height: 40px; background: #000; display: flex; color: #fff; }
.task { width: 49px; display: flex; align-items: center; justify-content: center; border-bottom: 2px solid transparent; }
.start { width: 48px; }
.sep { width: 4px; height: 16px; margin: 12px 12px 0 6px; border: solid #444; border-width: 0 1px; }
.run { background: linear-gradient(#76b9ed, #76b9ed) center 38px / 40px 2px no-repeat; background-origin: border-box; background-clip: border-box; }
.current { background: #333; border-bottom-color: #76b9ed; }
.tray { margin-left: auto; display: flex; }
.tray > span { display: flex; align-items: center; justify-content: center; }
.clock { width: 66px; display: flex; flex-direction: column; justify-content: center; text-align: center; font-family: "Open Sans", sans-serif; font-size: 12px; line-height: 18px; letter-spacing: -.38px; white-space: nowrap; }
.clock b { font-weight: normal; }
.peek { width: 5px; margin-left: 2px; border-left: 1px solid #555; }
```
